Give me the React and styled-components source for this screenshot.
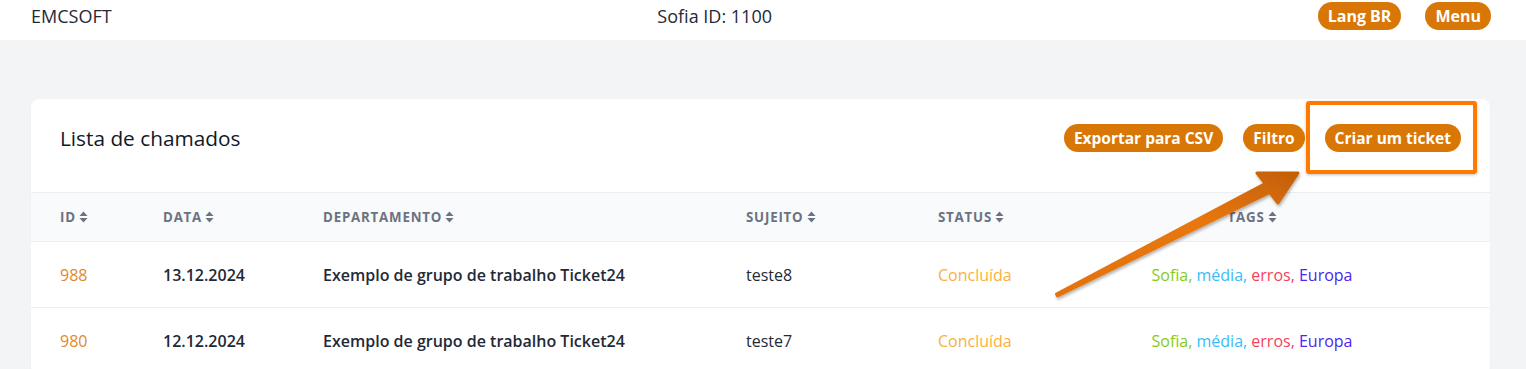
import React from "react";
import styled, { createGlobalStyle } from "styled-components";

const Global = createGlobalStyle`
  html, body { margin: 0; padding: 0; }
  body {
    background: #f3f4f6;
    font-family: "Open Sans", "Noto Sans", sans-serif;
    color: #111827;
  }
`;

const Page = styled.div`
  position: relative;
  min-height: 369px;
`;

const TopBar = styled.header`
  height: 40px;
  box-sizing: border-box;
  background: #ffffff;
  display: flex;
  align-items: center;
  justify-content: space-between;
  padding: 0 35px 8px 31px;
  font-size: 18px;
  color: #1f2937;
`;

const Brand = styled.div``;
const SofiaId = styled.div``;

const NavGroup = styled.div`
  display: flex;
  gap: 24px;
`;

const Pill = styled.button`
  border: 0;
  background: #d97706;
  color: #ffffff;
  font-family: inherit;
  font-weight: 700;
  font-size: ${(p) => (p.$small ? "15.5px" : "16px")};
  height: 28px;
  padding: 0 10px;
  border-radius: 14px;
  display: inline-flex;
  align-items: center;
  cursor: pointer;
`;

const Main = styled.main`
  padding: 59px 36px 0 31px;
`;

const Card = styled.section`
  background: #ffffff;
  border-radius: 8px;
  box-shadow: 0 1px 2px rgba(0, 0, 0, 0.04);
`;

const CardHead = styled.div`
  height: 93px;
  box-sizing: border-box;
  display: flex;
  align-items: center;
  justify-content: space-between;
  padding: 0 29px 15px 29px;
`;

const Title = styled.h2`
  margin: 0;
  font-size: 20.8px;
  font-weight: 500;
  color: #111827;
`;

const Actions = styled.div`
  display: flex;
  gap: 20px;
`;

const COLS = "103px 160px 423px 192px 105px 1fr";

const HeadRow = styled.div`
  display: grid;
  grid-template-columns: ${COLS};
  align-items: center;
  height: 50px;
  box-sizing: border-box;
  padding: 0 29px;
  background: #f9fafb;
  border-top: 1px solid #eceef2;
  border-bottom: 1px solid #eceef2;
`;

const HeadCell = styled.div`
  display: flex;
  align-items: center;
  gap: 3px;
  justify-content: ${(p) => (p.$center ? "center" : "flex-start")};
  font-size: 13.3px;
  font-weight: 700;
  letter-spacing: 0.06em;
  text-transform: uppercase;
  color: #6b7280;
`;

const Row = styled.div`
  display: grid;
  grid-template-columns: ${COLS};
  align-items: center;
  height: 66px;
  box-sizing: border-box;
  padding: 0 29px;
  border-bottom: 1px solid #eceef2;
  font-size: 16px;
`;

const Cell = styled.div`
  color: ${(p) => p.$color || "#1f2937"};
  font-weight: ${(p) => (p.$bold ? 600 : 400)};
  text-align: ${(p) => (p.$center ? "center" : "left")};
  white-space: nowrap;
`;

const Tag = styled.span`
  color: ${(p) => p.$color};
`;

const Highlight = styled.div`
  position: absolute;
  left: 1306px;
  top: 101px;
  width: 171px;
  height: 73px;
  box-sizing: border-box;
  border: 4px solid #ff7b00;
  border-radius: 3px;
  box-shadow: 0 1px 3px rgba(0, 0, 0, 0.25);
  pointer-events: none;
`;

const ArrowLayer = styled.svg`
  position: absolute;
  left: 1040px;
  top: 150px;
  overflow: visible;
  pointer-events: none;
`;

const SortIcon = () => (
  <svg width="9" height="12" viewBox="0 0 9 12" fill="#6b7280">
    <path d="M4.5 0.5 L8.5 5 H0.5 Z" />
    <path d="M4.5 11.5 L8.5 7 H0.5 Z" />
  </svg>
);

const headers = [
  { label: "ID" },
  { label: "Data" },
  { label: "Departamento" },
  { label: "Sujeito" },
  { label: "Status" },
  { label: "Tags", center: true },
];

const tickets = [
  { id: "988", date: "13.12.2024", dept: "Exemplo de grupo de trabalho Ticket24", subject: "teste8", status: "Concluída" },
  { id: "980", date: "12.12.2024", dept: "Exemplo de grupo de trabalho Ticket24", subject: "teste7", status: "Concluída" },
];

const tags = [
  { t: "Sofia", c: "#84cc16" },
  { t: "média", c: "#38bdf8" },
  { t: "erros", c: "#f43f5e" },
  { t: "Europa", c: "#4f24f0" },
];

export default function App() {
  return (
    <Page>
      <Global />
      <TopBar>
        <Brand>EMCSOFT</Brand>
        <SofiaId>Sofia ID: 1100</SofiaId>
        <NavGroup>
          <Pill>Lang BR</Pill>
          <Pill>Menu</Pill>
        </NavGroup>
      </TopBar>
      <Main>
        <Card>
          <CardHead>
            <Title>Lista de chamados</Title>
            <Actions>
              <Pill $small>Exportar para CSV</Pill>
              <Pill $small>Filtro</Pill>
              <Pill $small>Criar um ticket</Pill>
            </Actions>
          </CardHead>
          <HeadRow>
            {headers.map((h) => (
              <HeadCell key={h.label} $center={h.center}>
                {h.label}
                <SortIcon />
              </HeadCell>
            ))}
          </HeadRow>
          {tickets.map((r) => (
            <Row key={r.id}>
              <Cell $color="#e0892c">{r.id}</Cell>
              <Cell $bold>{r.date}</Cell>
              <Cell $bold>{r.dept}</Cell>
              <Cell>{r.subject}</Cell>
              <Cell $color="#fbb03b">{r.status}</Cell>
              <Cell $center>
                {tags.map((g, i) => (
                  <Tag key={g.t} $color={g.c}>
                    {g.t}
                    {i < tags.length - 1 ? ", " : ""}
                  </Tag>
                ))}
              </Cell>
            </Row>
          ))}
        </Card>
      </Main>
      <Highlight />
      <ArrowLayer width="280" height="160" viewBox="0 0 280 160">
        <defs>
          <linearGradient id="arrowFill" x1="0" y1="1" x2="1" y2="0">
            <stop offset="0" stopColor="#e2720f" />
            <stop offset="0.6" stopColor="#e8780f" />
            <stop offset="1" stopColor="#c45f05" />
          </linearGradient>
          <filter id="arrowShadow" x="-10%" y="-10%" width="130%" height="130%">
            <feDropShadow dx="1" dy="2" stdDeviation="1.5" floodColor="#000" floodOpacity="0.3" />
          </filter>
        </defs>
        <polygon
          points="16.5,144.1 225.2,33.5 217,23 258,23 238,53 229.8,42.5 17.5,145.9"
          fill="url(#arrowFill)"
          stroke="url(#arrowFill)"
          strokeWidth="3"
          strokeLinejoin="round"
          filter="url(#arrowShadow)"
        />
      </ArrowLayer>
    </Page>
  );
}
